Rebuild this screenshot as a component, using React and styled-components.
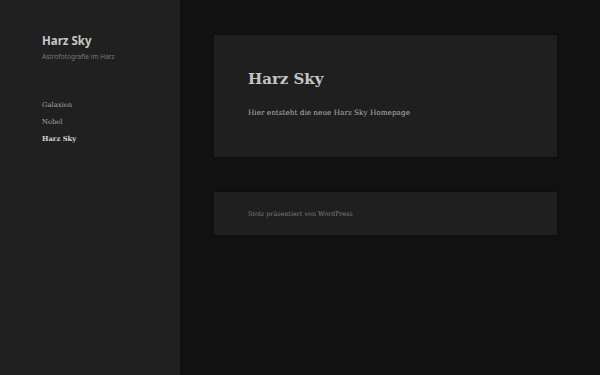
import React from "react";
import styled, { createGlobalStyle } from "styled-components";

const GlobalStyle = createGlobalStyle`
  html, body {
    margin: 0;
    padding: 0;
    background: #111111;
  }
  * { box-sizing: border-box; }
`;

const Page = styled.div`
  display: flex;
  width: 600px;
  height: 375px;
  background: #111111;
  overflow: hidden;
`;

const Sidebar = styled.aside`
  width: 180px;
  flex-shrink: 0;
  background: #202020;
  padding: 33px 0 0 42px;
  box-shadow: 0 0 1px rgba(0, 0, 0, 0.4);
`;

const SiteTitle = styled.h1`
  margin: 0;
  font-family: "Noto Sans", sans-serif;
  font-size: 11.5px;
  font-weight: 700;
  line-height: 16px;
  color: #c8c8c8;
`;

const Tagline = styled.p`
  margin: 3px 0 0;
  font-family: "Noto Sans", sans-serif;
  font-size: 6.6px;
  line-height: 10px;
  color: #7a7a7a;
`;

const Menu = styled.ul`
  list-style: none;
  margin: 38px 0 0;
  padding: 0;
  display: flex;
  flex-direction: column;
  gap: 7px;
`;

const MenuItem = styled.li`
  font-family: "DejaVu Serif", "Liberation Serif", serif;
  font-size: 6.8px;
  line-height: 10px;
  color: ${(p) => (p.$current ? "#d4d4d4" : "#a8a8a8")};
  font-weight: ${(p) => (p.$current ? 700 : 400)};
`;

const Main = styled.main`
  flex: 1;
  padding: 35px 43px 0 34px;
  display: flex;
  flex-direction: column;
  gap: 35px;
`;

const Card = styled.article`
  background: #1f1f1f;
  box-shadow: 0 0 2px rgba(0, 0, 0, 0.5);
  padding: ${(p) => p.$pad};
`;

const Heading = styled.h2`
  margin: 0;
  font-family: "DejaVu Serif", "Liberation Serif", serif;
  font-size: 15px;
  font-weight: 700;
  line-height: 20px;
  color: #c4c4c4;
`;

const Text = styled.p`
  margin: 18px 0 0;
  font-family: "DejaVu Serif", "Liberation Serif", serif;
  font-size: 7.3px;
  line-height: 12px;
  color: #b4b4b4;
`;

const FooterText = styled.p`
  margin: 0;
  font-family: "DejaVu Serif", "Liberation Serif", serif;
  font-size: 6.4px;
  line-height: 10px;
  color: #7e7e7e;
`;

export default function App() {
  return (
    <>
      <GlobalStyle />
      <Page>
        <Sidebar>
          <SiteTitle>Harz Sky</SiteTitle>
          <Tagline>Astrofotografie im Harz</Tagline>
          <Menu>
            <MenuItem>Galaxien</MenuItem>
            <MenuItem>Nebel</MenuItem>
            <MenuItem $current>Harz Sky</MenuItem>
          </Menu>
        </Sidebar>
        <Main>
          <Card $pad="34px 34px 38px">
            <Heading>Harz Sky</Heading>
            <Text>Hier entsteht die neue Harz Sky Homepage</Text>
          </Card>
          <Card $pad="17px 34px 16px">
            <FooterText>Stolz präsentiert von WordPress</FooterText>
          </Card>
        </Main>
      </Page>
    </>
  );
}
